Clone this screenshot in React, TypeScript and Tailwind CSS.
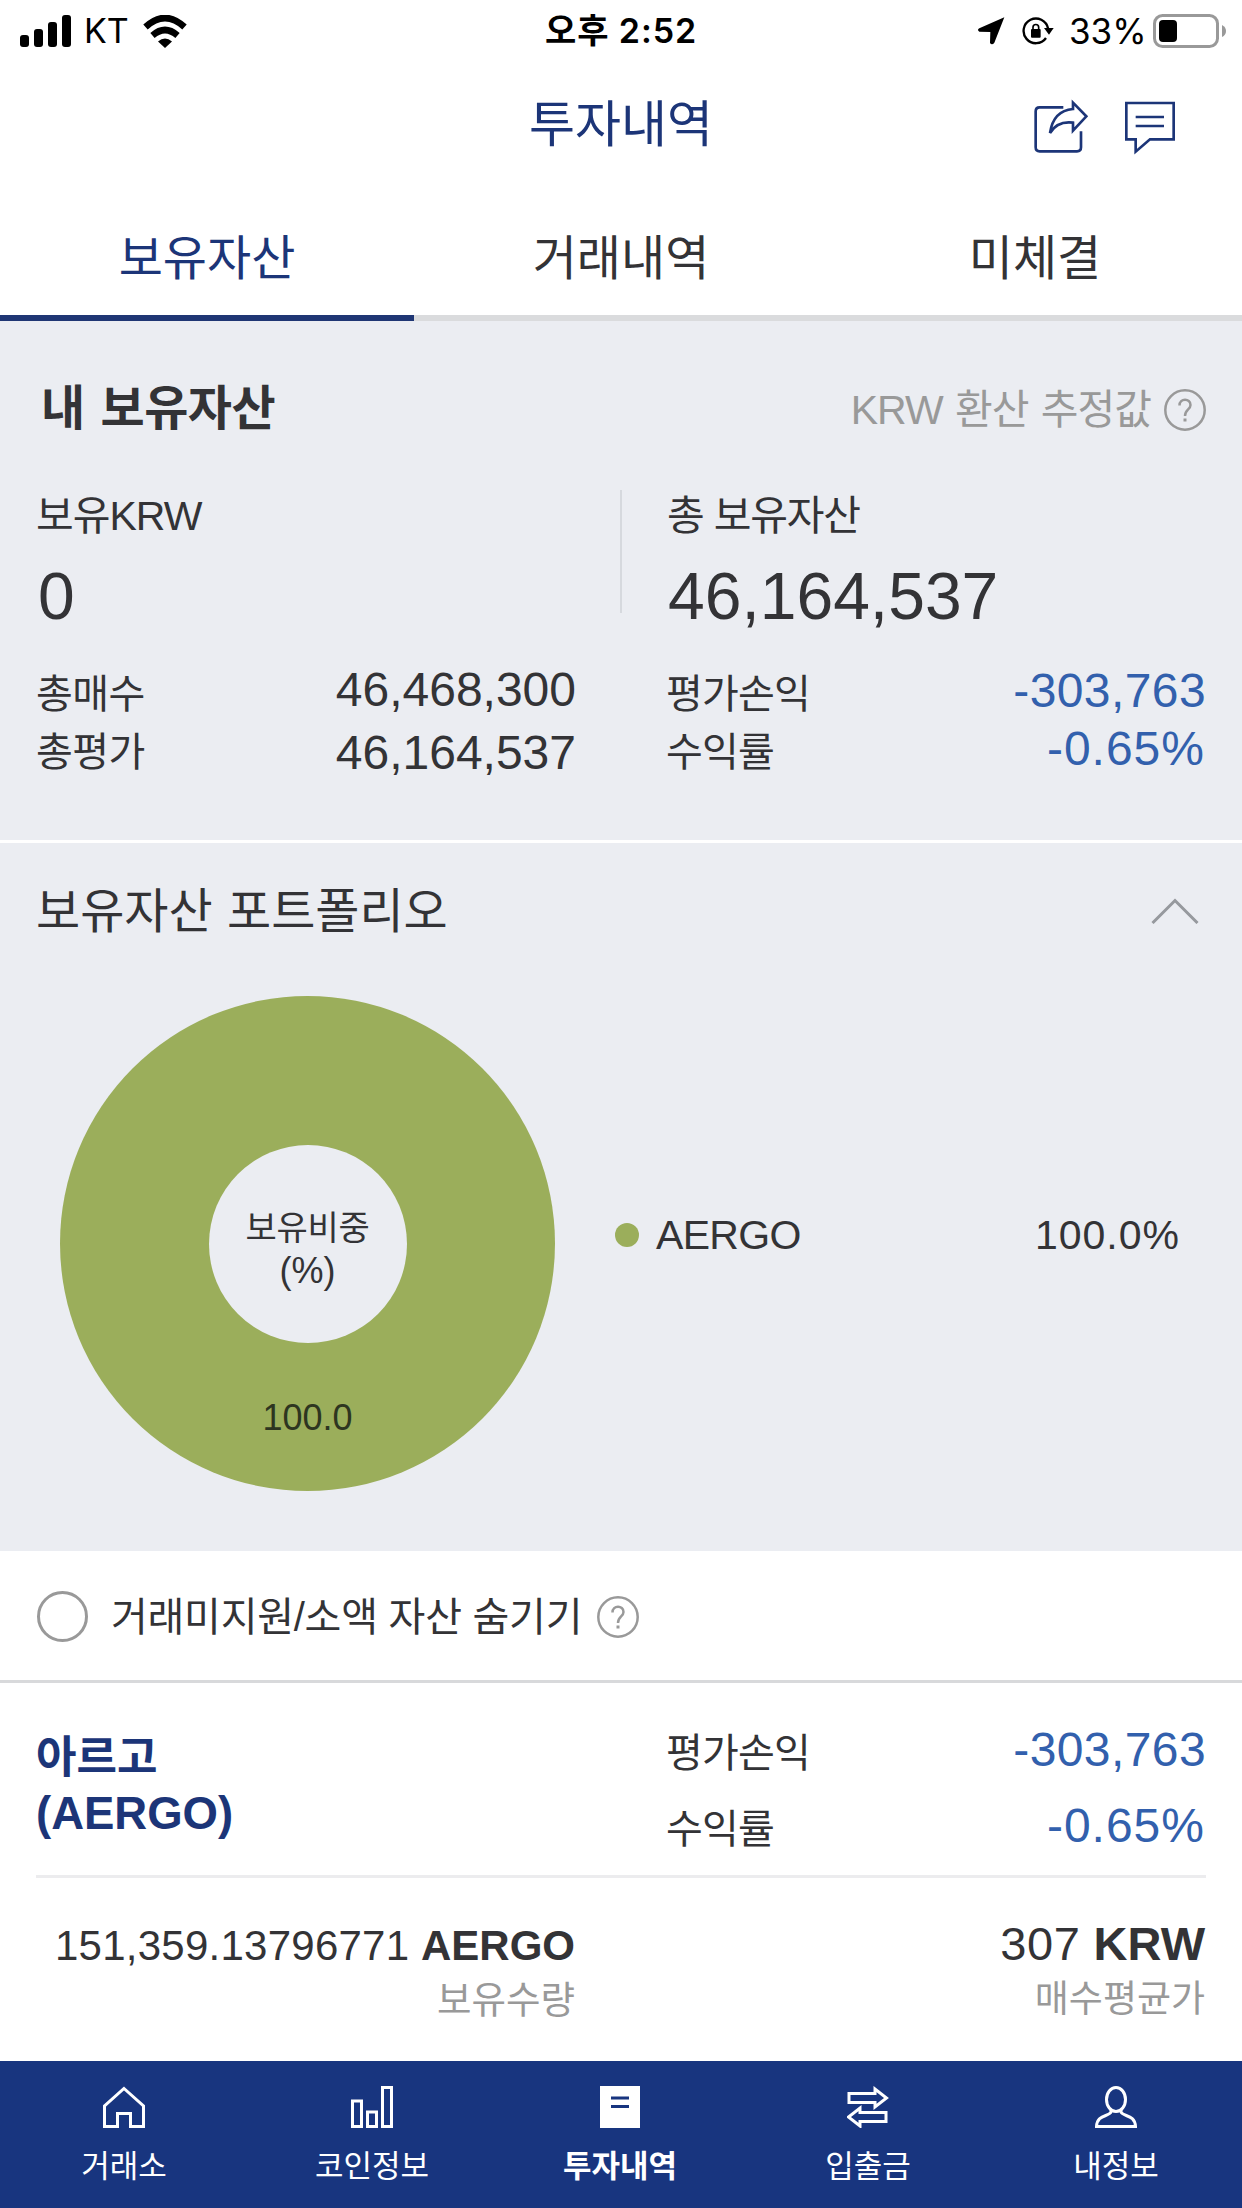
import type { ReactNode } from 'react'

function StatusBar() {
  return (
    <div className="relative flex h-[62px] items-center justify-between pl-[20px] pr-[16px] text-black font-[Inter,'Noto_Sans_CJK_KR',sans-serif]">
      <div className="flex items-center">
        <svg width="51" height="32" viewBox="0 0 51 32">
          <rect x="0" y="20" width="9" height="12" rx="3" />
          <rect x="14" y="14" width="9" height="18" rx="3" />
          <rect x="28" y="7" width="9" height="25" rx="3" />
          <rect x="42" y="0" width="9" height="32" rx="3" />
        </svg>
        <span className="ml-[13px] w-[59px] text-[34px] leading-[62px]">KT</span>
        <svg width="44" height="33" viewBox="0 0 44 33">
          <path d="M2.500 12 Q22 -6 41.500 12" fill="none" stroke="#000" strokeWidth="6.500" />
          <path d="M9.500 20.500 Q22 9.500 34.500 20.500" fill="none" stroke="#000" strokeWidth="6.500" />
          <path d="M15 26.500 Q22 20.500 29 26.500 L22 33 Z" />
        </svg>
      </div>
      <span className="absolute inset-x-0 text-center text-[34px] font-semibold leading-[62px] tracking-[0.9px]">오후 2:52</span>
      <div className="flex items-center">
        <svg width="28" height="28" viewBox="47 52 84 84">
          <path d="M129 53 L99 129 Q92 138 86 130 L87 97 L54 96 Q46 91 54 86 Z" />
        </svg>
        <svg className="ml-[17px]" width="33" height="30" viewBox="186 51 99 90">
          <path d="M264 88 A37 37 0 1 0 258 117" fill="none" stroke="#000" strokeWidth="7" />
          <path d="M252 87 H281 L267 107 Z" />
          <rect x="213" y="90" width="29" height="26" rx="3" />
          <path d="M219 92 V85 a8.500 8.500 0 0 1 17 0 V92" fill="none" stroke="#000" strokeWidth="5" />
        </svg>
        <span className="ml-[14px] w-[84px] whitespace-nowrap text-[35px] leading-[62px]">33%</span>
        <svg width="73" height="34" viewBox="0 0 73 34">
          <rect x="1.500" y="1.500" width="63" height="31" rx="8" fill="none" stroke="#999" strokeWidth="3" />
          <rect x="6" y="6" width="18" height="22" rx="4" />
          <path d="M69 11 Q73 13 73 17 Q73 21 69 23 Z" fill="#999" />
        </svg>
      </div>
    </div>
  )
}

function Header() {
  return (
    <header className="relative flex h-[124px] items-center justify-center text-[#1c3578]">
      <h1 className="pt-[3px] text-[50px] leading-[121px]">투자내역</h1>
      <div className="absolute right-[66px] top-[37px] flex gap-[35px]">
        <svg width="56" height="56" viewBox="222 295 168 168" fill="none" stroke="currentColor" strokeWidth="8">
          <path d="M313 320 H242 Q230 320 230 332 V440 Q230 452 242 452 H354 Q366 452 366 440 V392" />
          <path d="M342 306 L382 347 L342 390 V366 C310 362 288 372 273 397 C280 350 305 328 342 325 Z" />
        </svg>
        <svg width="52" height="56" viewBox="492 295 156 168" fill="none" stroke="currentColor" strokeWidth="8">
          <path d="M499 307 H641 V416 H570 L527 453 V416 H499 Z M527 349 H612 M527 376 H612" />
        </svg>
      </div>
    </header>
  )
}

function Tabs() {
  return (
    <nav className="grid h-[135px] grid-cols-3 text-center text-[48px] leading-[113px]">
      <span className="border-b-[6px] border-[#1f3674] pt-[16px] text-[#1c3578]">보유자산</span>
      <span className="border-b-[6px] border-[#dadbdd] pt-[16px]">거래내역</span>
      <span className="border-b-[6px] border-[#dadbdd] pt-[16px]">미체결</span>
    </nav>
  )
}

function HelpIcon() {
  return (
    <svg width="42" height="42" viewBox="0 0 42 42" fill="none" stroke="#999" strokeWidth="2.500">
      <circle cx="21" cy="21" r="19.700" />
      <path d="M15.500 16.500 C15.500 9 26.500 9 26.500 16 C26.500 20.500 21 20.500 21 27" />
      <path d="M21 29.500 V32.500" strokeWidth="3" />
    </svg>
  )
}

function Summary() {
  return (
    <section className="h-[519px] bg-[#ebedf2] pt-[58px]">
      <div className="flex h-[60px] items-center justify-between pl-[41px] pr-[36px]">
        <h2 className="text-[48px] font-bold leading-[60px] tracking-[-0.5px] [word-spacing:3px]">내 보유자산</h2>
        <div className="flex items-center gap-[13px] pt-[2px]">
          <span className="text-[41px] leading-[60px] tracking-[-1px] text-[#999] [word-spacing:2px]">KRW 환산 추정값</span>
          <HelpIcon />
        </div>
      </div>

      <div className="mt-[47px] flex h-[148px]">
        <div className="w-[620px] pl-[36px]">
          <div className="text-[41px] leading-[60px] tracking-[-1px]">보유KRW</div>
          <div className="mt-[20px] pl-[2px] text-[66px] leading-[60px]">0</div>
        </div>
        <div className="mt-[4px] h-[123px] w-[2px] bg-[#d6d9de]" />
        <div className="pl-[45px]">
          <div className="text-[41px] leading-[60px] tracking-[-1.200px]">총 보유자산</div>
          <div className="mt-[20px] pl-[1px] text-[66px] leading-[60px]">46,164,537</div>
        </div>
      </div>

      <div className="mt-[24px] flex">
        <div className="flex w-[576px] justify-between pl-[36px]">
          <div className="pt-[7px] text-[40px] leading-[58px] tracking-[-0.600px]">
            <p>총매수</p>
            <p>총평가</p>
          </div>
          <div className="text-right text-[48px] leading-[63px]">
            <p>46,468,300</p>
            <p>46,164,537</p>
          </div>
        </div>
        <div className="flex flex-1 justify-between pl-[90px] pr-[36px]">
          <div className="pt-[7px] text-[40px] leading-[58px] tracking-[-0.800px]">
            <p>평가손익</p>
            <p>수익률</p>
          </div>
          <div className="pt-[4px] text-right text-[48px] leading-[58px] text-[#3260ad]">
            <p className="tracking-[0.400px]">-303,763</p>
            <p className="pr-[1px] tracking-[1px]">-0.65%</p>
          </div>
        </div>
      </div>
    </section>
  )
}

function Portfolio() {
  return (
    <section className="h-[711px] border-t-[3px] border-white bg-[#ebedf2]">
      <div className="flex h-[136px] items-center justify-between pl-[36px] pr-[43px]">
        <h2 className="pt-[2px] text-[48px] leading-[60px] [word-spacing:1px]">보유자산 포트폴리오</h2>
        <svg width="48" height="26" viewBox="0 0 48 26" fill="none" stroke="#96999e" strokeWidth="3">
          <path d="M1.500 25 L24 2.500 L46.500 25" />
        </svg>
      </div>

      <div className="flex pt-[17px]">
        <div className="relative ml-[60px] flex size-[495px] items-center justify-center rounded-full bg-[#9bae5b]">
          <div className="flex size-[198px] flex-col items-center justify-center rounded-full bg-[#ebedf2] pt-[11px]">
            <span className="text-[34px] leading-[44px] tracking-[-0.300px]">보유비중</span>
            <span className="text-[36px] leading-[42px]">(%)</span>
          </div>
          <span className="absolute inset-x-0 top-[400px] text-center text-[36px] leading-[44px] text-[#2d3520]">100.0</span>
        </div>
        <div className="ml-[60px] mt-[209px] flex h-[60px] w-[565px] items-center text-[41px] leading-[60px]">
          <span className="size-[24px] rounded-full bg-[#9bae5b]" />
          <span className="ml-[17px] tracking-[-0.700px]">AERGO</span>
          <span className="ml-auto tracking-[1px]">100.0%</span>
        </div>
      </div>
    </section>
  )
}

function HideSmallAssets() {
  return (
    <div className="flex h-[132px] items-center border-b-[3px] border-[#d8d9db] pl-[37px] pt-[2px]">
      <span className="size-[51px] rounded-full border-[3px] border-[#999]" />
      <span className="ml-[23px] mr-[15px] text-[40px] leading-[60px] tracking-[-0.250px]">거래미지원/소액 자산 숨기기</span>
      <HelpIcon />
    </div>
  )
}

function AssetItem() {
  return (
    <section className="h-[378px] px-[36px]">
      <div className="flex h-[195px] border-b-[3px] border-[#ececee]">
        <div className="w-[630px] pt-[47px] font-bold leading-[56px] text-[#1c3578]">
          <p className="text-[44px]">아르고</p>
          <p className="text-[45.500px]">(AERGO)</p>
        </div>
        <div className="flex flex-1 justify-between">
          <div className="pt-[32px] text-[40px] leading-[76px] tracking-[-0.800px]">
            <p>평가손익</p>
            <p>수익률</p>
          </div>
          <div className="pt-[29px] text-right text-[48px] leading-[76px] text-[#3260ad]">
            <p className="tracking-[0.400px]">-303,763</p>
            <p className="pr-[1px] tracking-[1px]">-0.65%</p>
          </div>
        </div>
      </div>

      <div className="flex">
        <div className="w-[539px] pt-[38px] text-right">
          <p className="text-[42px] leading-[60px]">
            <span className="tracking-[0.250px]">151,359.13796771</span> <b>AERGO</b>
          </p>
          <p className="mt-[-6px] text-[37.500px] leading-[60px] text-[#999]">보유수량</p>
        </div>
        <div className="flex-1 pr-[1px] pt-[36px] text-right">
          <p className="text-[47px] leading-[60px]">
            <span className="tracking-[0.600px]">307</span> <b>KRW</b>
          </p>
          <p className="mt-[-4px] text-[37px] leading-[60px] text-[#999]">매수평균가</p>
        </div>
      </div>
    </section>
  )
}

interface NavItemProps {
  label: string
  active?: boolean
  children: ReactNode
}

function NavItem({ label, active = false, children }: NavItemProps) {
  return (
    <div className="flex flex-col items-center">
      <svg width="42" height="42" viewBox="0 0 42 42" fill="none" stroke="#fff" strokeWidth="3">
        {children}
      </svg>
      <span className={active ? 'mt-[19px] text-[31px] font-bold leading-[40px]' : 'mt-[19px] text-[31px] leading-[40px]'}>
        {label}
      </span>
    </div>
  )
}

function BottomNav() {
  return (
    <nav className="grid h-[147px] grid-cols-5 bg-[#18357f] pr-[2px] pt-[25px] text-white">
      <NavItem label="거래소">
        <path d="M21 2.500 L40.500 20 V40.500 H27.500 V27.500 H14.500 V40.500 H1.500 V20 Z" />
      </NavItem>
      <NavItem label="코인정보">
        <path d="M1.500 15 H10.500 V40.500 H1.500 Z M16.500 26 H25.500 V40.500 H16.500 Z M31.500 1.500 H40.500 V40.500 H31.500 Z" />
      </NavItem>
      <NavItem label="투자내역" active>
        <rect x="1" y="0" width="40" height="42" fill="#fff" stroke="none" />
        <path d="M12 12 H30 M12 20.500 H30" stroke="#18357f" />
      </NavItem>
      <NavItem label="입출금">
        <path d="M2 7.500 H28 V3 L39.500 12 L28 21 V16.500 H2 Z" />
        <path d="M39 26.500 H13 V22 L1.500 31 L13 40 V35.500 H39 Z" />
      </NavItem>
      <NavItem label="내정보">
        <ellipse cx="21" cy="13.500" rx="9.500" ry="12" />
        <path d="M16 23.500 V26 C14 31 2 28 1.500 40.500 H40.500 C40 28 28 31 26 26 V23.500" />
      </NavItem>
    </nav>
  )
}

export default function App() {
  return (
    <div className="h-[2208px] w-[1242px] overflow-hidden bg-white text-[#333336] font-['Liberation_Sans','Noto_Sans_CJK_KR',sans-serif]">
      <StatusBar />
      <Header />
      <Tabs />
      <Summary />
      <Portfolio />
      <HideSmallAssets />
      <AssetItem />
      <BottomNav />
    </div>
  )
}
